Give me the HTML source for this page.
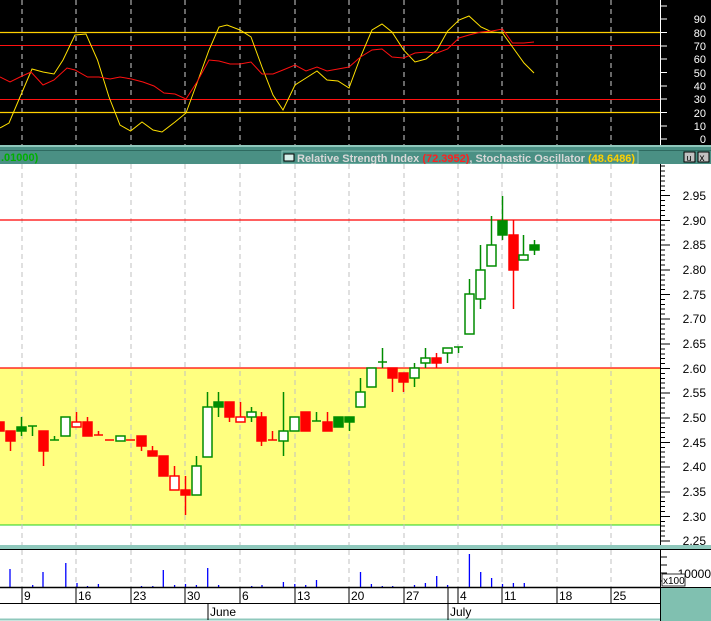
<!DOCTYPE html>
<html><head><meta charset="utf-8"><style>
html,body{margin:0;padding:0;background:#fff;width:711px;height:621px;overflow:hidden}
svg{display:block}
text{font-family:"Liberation Sans",sans-serif}
</style></head><body>
<svg width="711" height="621" viewBox="0 0 711 621" xmlns="http://www.w3.org/2000/svg">
<!-- top panel -->
<rect x="0" y="0" width="711" height="146" fill="#000"/>
<g stroke="#cfcfcf" stroke-dasharray="5,4" stroke-width="1">
<line x1="22" y1="0" x2="22" y2="146"/><line x1="76" y1="0" x2="76" y2="146"/><line x1="131" y1="0" x2="131" y2="146"/><line x1="185" y1="0" x2="185" y2="146"/><line x1="240" y1="0" x2="240" y2="146"/><line x1="295" y1="0" x2="295" y2="146"/><line x1="349" y1="0" x2="349" y2="146"/><line x1="404" y1="0" x2="404" y2="146"/><line x1="458" y1="0" x2="458" y2="146"/><line x1="502" y1="0" x2="502" y2="146"/><line x1="557" y1="0" x2="557" y2="146"/><line x1="611" y1="0" x2="611" y2="146"/>
</g>
<line x1="0" y1="32.5" x2="660" y2="32.5" stroke="#ffd000" stroke-width="1.2"/>
<line x1="0" y1="112.5" x2="660" y2="112.5" stroke="#ffd000" stroke-width="1.2"/>
<line x1="0" y1="45.5" x2="660" y2="45.5" stroke="#ff1010" stroke-width="1"/>
<line x1="0" y1="99.5" x2="660" y2="99.5" stroke="#ff1010" stroke-width="1"/>
<polyline fill="none" stroke="#ffe000" stroke-width="1" points="0,128 9,123 20,97 32,69 43,72 54,74 63,60 75,35 86,34 97.5,60 109,97 120,125 130.6,131 142,122 153,130 162,132 175,122 186,113 197,83 209,50 219,27 227,25 240,30 251,37 262,67 273,95 283,110 295,85 306,78 317,71 327,80 338,81 349,88 360.5,57 372,30 382,24 392,32 403.6,50 415,62 426,59 437,50 447.6,31 459,20 469,16 481,27 492,32 502.5,33 512.5,47 524,63 534,73"/>
<polyline fill="none" stroke="#ff1010" stroke-width="1" points="0,77 10,82 20,77 31,72 43,85 54,80 67,68 75,70 87.5,77 99,77 110,79 120,77 131.5,79 143,82 154,86 164,93 175,94 186,99 197,82 209,60 219,61 230,64 240,64 251,62 262,74 273,74 283,70 295,65 306,71 317,67 327,71 338,69 349,67 360.5,57 372,50 382,49 392,57 403.6,58 415,53 426,52 437,53 447.6,49 459,38 469,35 481,32 492,31 502.5,29 512.5,43 524,43 534,42"/>
<line x1="660.5" y1="0" x2="660.5" y2="146" stroke="#fff"/>
<g stroke="#fff"><line x1="660" y1="6" x2="667" y2="6"/><line x1="660" y1="19" x2="667" y2="19"/><line x1="660" y1="32.5" x2="667" y2="32.5"/><line x1="660" y1="46" x2="667" y2="46"/><line x1="660" y1="59" x2="667" y2="59"/><line x1="660" y1="72.5" x2="667" y2="72.5"/><line x1="660" y1="86" x2="667" y2="86"/><line x1="660" y1="99" x2="667" y2="99"/><line x1="660" y1="112.5" x2="667" y2="112.5"/><line x1="660" y1="126" x2="667" y2="126"/><line x1="660" y1="139" x2="667" y2="139"/></g>
<g fill="#fff" font-size="11" text-anchor="end">
<text x="706" y="23">90</text><text x="706" y="37">80</text><text x="706" y="50">70</text><text x="706" y="63">60</text><text x="706" y="77">50</text><text x="706" y="90">40</text><text x="706" y="103">30</text><text x="706" y="117">20</text><text x="706" y="130">10</text><text x="706" y="143">0</text>
</g>
<!-- title bar -->
<rect x="0" y="145" width="711" height="19" fill="#4a9084"/>
<line x1="0" y1="146" x2="711" y2="146" stroke="#8fc8bc" stroke-width="2"/>
<line x1="0" y1="150.5" x2="711" y2="150.5" stroke="#2e6a60" stroke-width="1"/>
<text x="1" y="161" fill="#00b000" font-size="11" font-weight="bold">.01000)</text>
<rect x="282" y="151" width="356" height="13" fill="#4a9084" stroke="#8fc8bc"/>
<rect x="284" y="154" width="10" height="7" fill="#d8f0ea" stroke="#000" stroke-width="1"/>
<text x="297" y="162" font-size="11" font-weight="bold" fill="#d8d8d8">Relative Strength Index <tspan fill="#ff2020">(72.3952)</tspan>, Stochastic Oscillator <tspan fill="#ffd000">(48.6486)</tspan></text>
<rect x="684" y="152" width="11" height="10" fill="#c0c0c0" stroke="#000" stroke-width="1"/>
<rect x="698" y="152" width="11" height="10" fill="#c0c0c0" stroke="#000" stroke-width="1"/>
<text x="686.5" y="161" font-size="9" fill="#000">u</text><text x="699.5" y="161" font-size="10" fill="#000">x</text>
<!-- main panel -->
<rect x="0" y="164" width="660" height="383" fill="#fff"/>
<rect x="0" y="368" width="660" height="157" fill="#ffff80"/>
<line x1="0" y1="525" x2="660" y2="525" stroke="#20d020" stroke-width="1"/>
<g stroke="#c0c0c0" stroke-dasharray="5,4" stroke-width="1">
<line x1="22" y1="164" x2="22" y2="587"/><line x1="76" y1="164" x2="76" y2="587"/><line x1="131" y1="164" x2="131" y2="587"/><line x1="185" y1="164" x2="185" y2="587"/><line x1="240" y1="164" x2="240" y2="587"/><line x1="295" y1="164" x2="295" y2="587"/><line x1="349" y1="164" x2="349" y2="587"/><line x1="404" y1="164" x2="404" y2="587"/><line x1="458" y1="164" x2="458" y2="587"/><line x1="502" y1="164" x2="502" y2="587"/><line x1="557" y1="164" x2="557" y2="587"/><line x1="611" y1="164" x2="611" y2="587"/>
</g>
<line x1="0" y1="220" x2="660" y2="220" stroke="#ff0000" stroke-width="1.2"/>
<line x1="0" y1="368" x2="660" y2="368" stroke="#ff0000" stroke-width="1.2"/>
<!-- candles -->
<g stroke-width="1.5">
<g stroke="#ff0000" fill="#ff0000">
<rect x="0" y="422" width="4" height="9"/>
<line x1="10.5" y1="431" x2="10.5" y2="451"/><rect x="6" y="431" width="9" height="10"/>
<line x1="43.5" y1="431" x2="43.5" y2="466"/><rect x="39" y="431" width="9" height="20"/>
<line x1="76.5" y1="412" x2="76.5" y2="422"/><rect x="72" y="422" width="9" height="5" fill="#fff"/>
<line x1="87.5" y1="417" x2="87.5" y2="422"/><rect x="83" y="422" width="9" height="14"/>
<line x1="98.5" y1="431" x2="98.5" y2="435"/><line x1="94" y1="435" x2="103" y2="435"/>
<line x1="105" y1="440" x2="114" y2="440"/>
<line x1="126" y1="440" x2="135" y2="440"/>
<line x1="141.5" y1="446" x2="141.5" y2="451"/><rect x="137" y="436" width="9" height="10"/>
<line x1="152.5" y1="446" x2="152.5" y2="451"/><rect x="148" y="451" width="9" height="5"/>
<rect x="159" y="456" width="9" height="20"/>
<line x1="174.5" y1="466" x2="174.5" y2="476"/><rect x="170" y="476" width="9" height="14" fill="#fff"/>
<line x1="185.5" y1="476" x2="185.5" y2="515"/><rect x="181" y="490" width="9" height="5"/>
<line x1="229.5" y1="417" x2="229.5" y2="422"/><rect x="225" y="402" width="9" height="15"/>
<line x1="240.5" y1="402" x2="240.5" y2="417"/><rect x="236" y="417" width="9" height="5" fill="#fff"/>
<line x1="261.5" y1="412" x2="261.5" y2="446"/><rect x="257" y="417" width="9" height="24"/>
<line x1="272.5" y1="431" x2="272.5" y2="440"/><line x1="268" y1="440" x2="277" y2="440"/>
<rect x="301" y="412" width="9" height="19"/>
<line x1="327.5" y1="412" x2="327.5" y2="422"/><rect x="323" y="422" width="9" height="9"/>
<line x1="392.5" y1="378" x2="392.5" y2="392"/><rect x="388" y="368" width="9" height="10"/>
<line x1="403.5" y1="382" x2="403.5" y2="392"/><rect x="399" y="373" width="9" height="9"/>
<line x1="436.5" y1="353" x2="436.5" y2="368"/><rect x="432" y="358" width="9" height="5"/>
<line x1="513.5" y1="220" x2="513.5" y2="309"/><rect x="509" y="235" width="9" height="35"/>
</g>
<g stroke="#008c00" fill="#008c00">
<line x1="21.5" y1="417" x2="21.5" y2="436"/><rect x="17" y="427" width="9" height="4"/>
<line x1="32.5" y1="426" x2="32.5" y2="436"/><line x1="28" y1="426" x2="37" y2="426"/>
<line x1="54.5" y1="436" x2="54.5" y2="440"/><line x1="50" y1="440" x2="59" y2="440"/>
<rect x="61" y="417" width="9" height="19" fill="#fff"/>
<rect x="116" y="436" width="9" height="5" fill="#fff"/>
<line x1="196.5" y1="456" x2="196.5" y2="466"/><rect x="192" y="466" width="9" height="29" fill="#fff"/>
<line x1="207.5" y1="392" x2="207.5" y2="407"/><rect x="203" y="407" width="9" height="50" fill="#fff"/>
<line x1="218.5" y1="392" x2="218.5" y2="417"/><rect x="214" y="402" width="9" height="5"/>
<line x1="251.5" y1="407" x2="251.5" y2="422"/><rect x="247" y="412" width="9" height="5" fill="#fff"/>
<line x1="283.5" y1="392" x2="283.5" y2="456"/><rect x="279" y="431" width="9" height="10" fill="#fff"/>
<rect x="290" y="417" width="9" height="14" fill="#fff"/>
<line x1="316.5" y1="412" x2="316.5" y2="421"/><line x1="312" y1="421" x2="321" y2="421"/>
<rect x="334" y="417" width="9" height="10"/>
<line x1="349.5" y1="422" x2="349.5" y2="431"/><rect x="345" y="417" width="9" height="5"/>
<line x1="360.5" y1="378" x2="360.5" y2="392"/><rect x="356" y="392" width="9" height="15" fill="#fff"/>
<rect x="367" y="368" width="9" height="19" fill="#fff"/>
<line x1="382.5" y1="348" x2="382.5" y2="368"/><line x1="378" y1="362" x2="387" y2="362"/>
<line x1="414.5" y1="363" x2="414.5" y2="387"/><rect x="410" y="368" width="9" height="10" fill="#fff"/>
<line x1="425.5" y1="348" x2="425.5" y2="368"/><rect x="421" y="358" width="9" height="5" fill="#fff"/>
<line x1="447.5" y1="348" x2="447.5" y2="363"/><rect x="443" y="348" width="9" height="5" fill="#fff"/>
<line x1="458.5" y1="347" x2="458.5" y2="353"/><line x1="454" y1="347" x2="463" y2="347"/>
<line x1="469.5" y1="279" x2="469.5" y2="294"/><rect x="465" y="294" width="9" height="40" fill="#fff"/>
<line x1="480.5" y1="245" x2="480.5" y2="309"/><rect x="476" y="270" width="9" height="29" fill="#fff"/>
<line x1="491.5" y1="216" x2="491.5" y2="245"/><rect x="487" y="245" width="9" height="21" fill="#fff"/>
<line x1="502.5" y1="196" x2="502.5" y2="240"/><rect x="498" y="221" width="9" height="14"/>
<line x1="523.5" y1="235" x2="523.5" y2="255"/><rect x="519" y="255" width="9" height="5" fill="#fff"/>
<line x1="534.5" y1="240" x2="534.5" y2="255"/><rect x="530" y="245" width="9" height="5"/>
</g>
</g>
<!-- main axis -->
<line x1="660.5" y1="164" x2="660.5" y2="547" stroke="#000"/>
<path stroke="#000" d="M660 195.5h10M660 220.5h10M660 245h10M660 270h10M660 294.5h10M660 319h10M660 344h10M660 368.5h10M660 393h10M660 418h10M660 442.5h10M660 467h10M660 492h10M660 516.5h10M660 541h10"/>
<path stroke="#000" d="M660 166h5M660 171h5M660 176h5M660 181h5M660 186h5M660 190.5h5M660 200.5h5M660 205.5h5M660 210.5h5M660 215.5h5M660 225h5M660 230h5M660 235h5M660 240h5M660 250h5M660 255h5M660 260h5M660 265h5M660 275h5M660 280h5M660 285h5M660 289.5h5M660 299.5h5M660 304.5h5M660 309h5M660 314h5M660 324h5M660 329h5M660 334h5M660 339h5M660 349h5M660 354h5M660 358.5h5M660 363.5h5M660 373.5h5M660 378.5h5M660 383h5M660 388h5M660 398h5M660 403h5M660 408h5M660 413h5M660 423h5M660 427.5h5M660 432.5h5M660 437.5h5M660 447.5h5M660 452h5M660 457h5M660 462h5M660 472h5M660 477h5M660 482h5M660 487h5M660 497h5M660 501.5h5M660 506.5h5M660 511.5h5M660 521.5h5M660 526h5M660 531h5M660 536h5"/>
<g fill="#000" font-size="12" text-anchor="end">
<text x="706" y="200">2.95</text><text x="706" y="225">2.90</text><text x="706" y="249">2.85</text><text x="706" y="274">2.80</text><text x="706" y="299">2.75</text><text x="706" y="323">2.70</text><text x="706" y="348">2.65</text><text x="706" y="373">2.60</text><text x="706" y="397">2.55</text><text x="706" y="422">2.50</text><text x="706" y="447">2.45</text><text x="706" y="471">2.40</text><text x="706" y="496">2.35</text><text x="706" y="521">2.30</text><text x="706" y="545">2.25</text>
</g>
<!-- separator -->
<rect x="0" y="545" width="711" height="4" fill="#8fc8bc"/>
<line x1="0" y1="549.5" x2="711" y2="549.5" stroke="#000"/>
<!-- volume -->
<rect x="0" y="550" width="660" height="37" fill="#fff"/>
<g stroke="#c0c0c0" stroke-dasharray="5,4">
<line x1="22" y1="550" x2="22" y2="587"/><line x1="76" y1="550" x2="76" y2="587"/><line x1="131" y1="550" x2="131" y2="587"/><line x1="185" y1="550" x2="185" y2="587"/><line x1="240" y1="550" x2="240" y2="587"/><line x1="295" y1="550" x2="295" y2="587"/><line x1="349" y1="550" x2="349" y2="587"/><line x1="404" y1="550" x2="404" y2="587"/><line x1="458" y1="550" x2="458" y2="587"/><line x1="502" y1="550" x2="502" y2="587"/><line x1="557" y1="550" x2="557" y2="587"/><line x1="611" y1="550" x2="611" y2="587"/>
</g>
<path stroke="#0000ff" stroke-width="1.3" d="M10 587V569M32.7 587V585M43 587V572M65.8 587V563M77 587V583M87.5 587V586M98.4 587V584M141.5 587V586M152.8 587V586M163.3 587V570M174.6 587V585M185.5 587V584M196.4 587V585M207.7 587V568M218.6 587V585M251.7 587V586M262 587V585M283.4 587V582M294.8 587V584M305.7 587V585M316.5 587V580M360.5 587V572M371.4 587V584M382.3 587V586M392.7 587V586M414.5 587V585M425.4 587V583M436.7 587V576M447.6 587V585M469.4 587V554M480.7 587V572M491.6 587V578M502.5 587V584M513.4 587V583M524.3 587V583"/>
<line x1="660.5" y1="550" x2="660.5" y2="587" stroke="#000"/>
<path d="M660 557h7M660 565h7M660 573h7M660 581h7" stroke="#000"/>
<text x="711" y="578" font-size="12" fill="#000" text-anchor="end">10000</text>
<rect x="662" y="574" width="23" height="12" fill="#fff" stroke="#000" stroke-width="0.8"/>
<text x="663" y="584" font-size="10" fill="#000">x100</text>
<!-- date axis -->
<rect x="0" y="587" width="660" height="34" fill="#fff"/>
<line x1="0" y1="587.5" x2="660" y2="587.5" stroke="#000" stroke-width="1.5"/>
<line x1="0" y1="603.5" x2="660" y2="603.5" stroke="#000"/>
<line x1="0" y1="619.5" x2="660" y2="619.5" stroke="#8fc8bc" stroke-width="2"/>
<path stroke="#000" d="M22 588v15M76 588v15M131 588v15M185 588v15M240 588v15M295 588v15M349 588v15M404 588v15M448 588v15M458 588v15M502 588v15M557 588v15M611 588v15M208 604v16M448 604v16M660.5 587v34"/>
<g fill="#000" font-size="12">
<text x="24" y="600">9</text><text x="78" y="600">16</text><text x="133" y="600">23</text><text x="187" y="600">30</text><text x="242" y="600">6</text><text x="297" y="600">13</text><text x="351" y="600">20</text><text x="406" y="600">27</text><text x="460" y="600">4</text><text x="504" y="600">11</text><text x="559" y="600">18</text><text x="613" y="600">25</text>
<text x="210" y="616">June</text><text x="450" y="616">July</text>
</g>
<rect x="661" y="588" width="50" height="33" fill="#80c0b0"/>
<line x1="661" y1="587.5" x2="711" y2="587.5" stroke="#000"/>
</svg>
</body></html>
